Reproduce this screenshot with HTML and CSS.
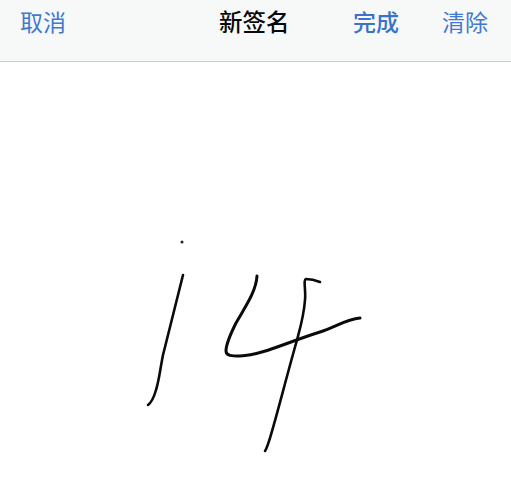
FILE: index.html
```html
<!DOCTYPE html>
<html lang="zh">
<head>
<meta charset="utf-8">
<title>新签名</title>
<link rel="stylesheet" href="styles.css">
</head>
<body>
<header class="nav">
  <span class="action">取消</span>
  <span class="title">新签名</span>
  <span class="action action-strong">完成</span>
  <span class="action">清除</span>
</header>
<main class="canvas">
  <svg class="ink" viewBox="0 0 511 419" width="511" height="419" aria-hidden="true">
    <g transform="translate(0 -62)">
      <circle class="dot" cx="182" cy="242" r="1.5"/>
      <path class="stroke thin" d="M183 275 C176 303 169 331 163 355 C160 370 159 381 156 390 C154 397 152 402 148 405"/>
      <path class="stroke" d="M257 276 C256 292 245 307 236 323 C230 335 226 344 226 351 C226 356 232 356 240 356 C262 355 285 343 320 332 C335 327 347 319 360 318"/>
      <path class="stroke thin" d="M320 282 C315 280 310 279 306 279 C303 280 306 290 305 300 C304 315 301 325 297 340 C287 375 277 415 270 438 C268 444 267 448 265 451"/>
    </g>
  </svg>
</main>
</body>
</html>
```

FILE: styles.css
```css
html, body {
  margin: 0;
  padding: 0;
  width: 511px;
  height: 481px;
  overflow: hidden;
  background: #ffffff;
  font-family: "Noto Sans CJK SC", "Liberation Sans", sans-serif;
}

.nav {
  box-sizing: border-box;
  height: 62px;
  padding: 0 0 20px 20px;
  display: grid;
  grid-template-columns: 199px 134px 89px 1fr;
  align-items: center;
  background: #f7f8f8;
  border-bottom: 1px solid #cdcdcd;
}

.action {
  font-size: 23px;
  line-height: 30px;
  color: #4079d2;
}

.action-strong {
  font-weight: 500;
  color: #3a72cc;
}

.title {
  font-size: 23.5px;
  line-height: 30px;
  font-weight: 500;
  color: #0a0a0a;
}

.canvas {
  display: block;
  height: 419px;
  background: #ffffff;
}

.ink {
  display: block;
}

.stroke {
  fill: none;
  stroke: #0a0a0a;
  stroke-width: 3;
  stroke-linecap: round;
  stroke-linejoin: round;
}

.thin {
  stroke-width: 2.6;
}

.dot {
  fill: #222222;
}
```
